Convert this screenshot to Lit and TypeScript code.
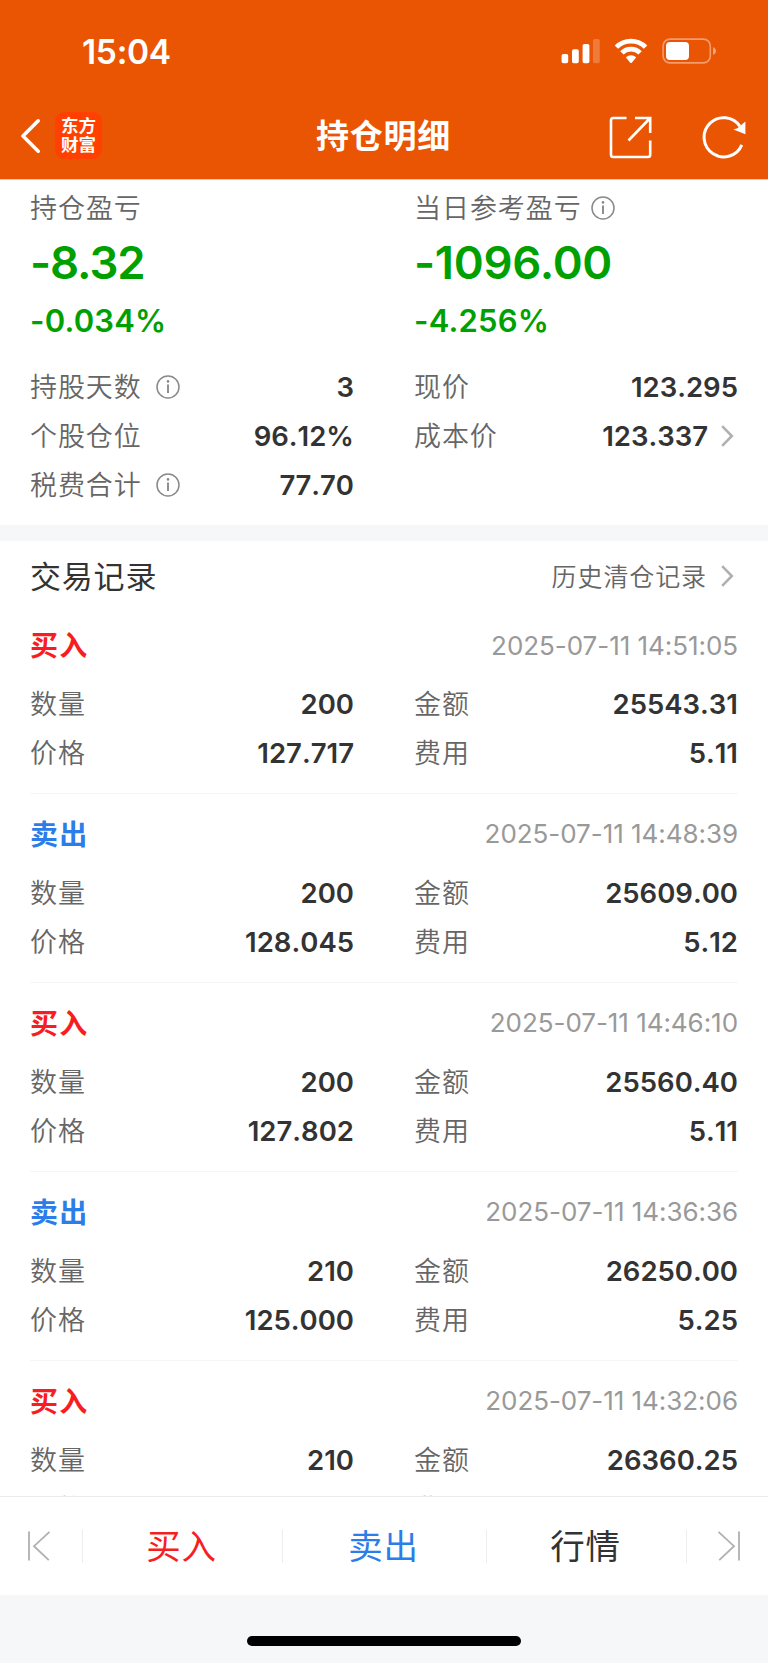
import { LitElement, html, css, svg } from "lit";
import { customElement, property } from "lit/decorators.js";

interface Trade {
  side: "buy" | "sell";
  time: string;
  qty: string;
  amount: string;
  price: string;
  fee: string;
}

const TRADES: Trade[] = [
  { side: "buy", time: "2025-07-11 14:51:05", qty: "200", amount: "25543.31", price: "127.717", fee: "5.11" },
  { side: "sell", time: "2025-07-11 14:48:39", qty: "200", amount: "25609.00", price: "128.045", fee: "5.12" },
  { side: "buy", time: "2025-07-11 14:46:10", qty: "200", amount: "25560.40", price: "127.802", fee: "5.11" },
  { side: "sell", time: "2025-07-11 14:36:36", qty: "210", amount: "26250.00", price: "125.000", fee: "5.25" },
  { side: "buy", time: "2025-07-11 14:32:06", qty: "210", amount: "26360.25", price: "125.525", fee: "5.27" },
];

const infoIcon = html`<svg class="info" width="24" height="24" viewBox="0 0 24 24" fill="none" stroke="#8a8a8a">
  <circle cx="12" cy="12" r="11" stroke-width="1.5" />
  <path d="M12 9.6V18" stroke-width="1.9" />
  <circle cx="12" cy="6.4" r="1.3" fill="#8a8a8a" stroke="none" />
</svg>`;

const moreIcon = html`<svg class="more" width="14" height="22" viewBox="0 0 14 22" fill="none" stroke="#b0b0b0" stroke-width="2.6">
  <path d="M1.2 1.2L10.8 11L1.2 20.8" />
</svg>`;

@customElement("info-row")
class InfoRow extends LitElement {
  @property() label = "";
  @property() value = "";
  @property({ type: Boolean }) info = false;
  @property({ type: Boolean }) more = false;

  static styles = css`
    :host {
      display: flex;
      align-items: center;
      height: 49.2px;
    }
    .label {
      flex: 1;
      display: flex;
      align-items: center;
      font-weight: 350;
      color: #666;
    }
    .text {
      font-size: 27px;
      letter-spacing: 0.9px;
      padding-bottom: 3px;
    }
    .info {
      margin-left: 14px;
    }
    .value {
      font-size: 27.5px;
      font-weight: 600;
      color: #333;
      letter-spacing: 0;
      font-kerning: none;
    }
    .more {
      margin: 0 3px 0 13px;
    }
  `;

  render() {
    return html`<span class="label"><span class="text">${this.label}</span>${this.info ? infoIcon : ""}</span>
      <span class="value">${this.value}</span>${this.more ? moreIcon : ""}`;
  }
}

@customElement("trade-record")
class TradeRecord extends LitElement {
  @property({ attribute: false }) trade!: Trade;

  static styles = css`
    :host {
      display: block;
      box-sizing: border-box;
      height: 188.9px;
      margin: 0 30px;
      padding-top: 5px;
      border-bottom: 1.5px solid #f4f5f6;
    }
    .head {
      display: flex;
      align-items: center;
      justify-content: space-between;
      height: 69px;
    }
    .side {
      font-size: 28px;
      font-weight: 600;
      letter-spacing: 1.2px;
      padding-bottom: 2px;
    }
    .buy {
      color: #f81d22;
    }
    .sell {
      color: #2b7de9;
    }
    .time {
      font-size: 26px;
      color: #999;
      letter-spacing: -0.05px;
    }
    .grid {
      display: grid;
      grid-template-columns: 1fr 1fr;
      column-gap: 60px;
    }
  `;

  render() {
    const t = this.trade;
    return html`<div class="head">
        <span class="side ${t.side}">${t.side === "buy" ? "买入" : "卖出"}</span>
        <span class="time">${t.time}</span>
      </div>
      <div class="grid">
        <info-row label="数量" value=${t.qty}></info-row>
        <info-row label="金额" value=${t.amount}></info-row>
        <info-row label="价格" value=${t.price}></info-row>
        <info-row label="费用" value=${t.fee}></info-row>
      </div>`;
  }
}

@customElement("app-root")
class AppRoot extends LitElement {
  static styles = css`
    :host {
      display: flex;
      flex-direction: column;
      width: 768px;
      height: 1663px;
      overflow: hidden;
      background: #fff;
      color: #333;
      font-family: Inter, "Noto Sans CJK SC", sans-serif;
      white-space: nowrap;
    }
    .header {
      background: #ea5504;
      color: #fff;
      flex: none;
      border-bottom: 1px solid #f7c6a9;
      box-sizing: border-box;
      height: 180px;
    }
    .status {
      height: 98px;
      box-sizing: border-box;
      padding: 4px 51px 0 82px;
      display: flex;
      align-items: center;
      justify-content: space-between;
    }
    .clock {
      font-size: 33.5px;
      font-weight: 600;
      letter-spacing: -0.3px;
      padding-top: 2px;
    }
    .nav {
      height: 77px;
      display: grid;
      grid-template-columns: 1fr auto 1fr;
      align-items: center;
      padding: 0 22px 0 21px;
    }
    .nav-left {
      display: flex;
      align-items: center;
      gap: 14px;
      padding-bottom: 2px;
    }
    .logo {
      width: 47px;
      height: 47px;
      border-radius: 9px;
      background: #ff4000;
      display: flex;
      flex-direction: column;
      align-items: center;
      justify-content: center;
      font-size: 17.5px;
      line-height: 19px;
      font-weight: 700;
      box-sizing: border-box;
      padding-bottom: 2px;
    }
    .title {
      font-size: 33px;
      font-weight: 600;
      letter-spacing: 0.7px;
      padding-bottom: 5px;
    }
    .nav-right {
      display: flex;
      justify-content: flex-end;
      gap: 50px;
    }
    .summary {
      flex: none;
      box-sizing: border-box;
      height: 345px;
      padding: 9px 30px 0;
    }
    .cols {
      display: grid;
      grid-template-columns: 1fr 1fr;
      column-gap: 60px;
    }
    .label {
      display: flex;
      align-items: center;
      height: 38px;
      font-size: 27px;
      font-weight: 350;
      letter-spacing: 0.95px;
      color: #666;
    }
    .label span {
      padding-bottom: 3px;
    }
    .label .info {
      margin-left: 9px;
    }
    .big {
      height: 70px;
      line-height: 71px;
      font-size: 45.5px;
      font-weight: 600;
      letter-spacing: -0.3px;
      color: #00a000;
    }
    .tight {
      letter-spacing: -1.1px;
    }
    .pct {
      height: 46px;
      line-height: 47px;
      font-size: 31px;
      font-weight: 560;
      letter-spacing: 0.2px;
      color: #00a000;
    }
    .facts {
      margin-top: 19.5px;
    }
    .band {
      flex: none;
      height: 16px;
      background: #f6f7f9;
    }
    .section {
      flex: none;
      height: 64.5px;
      box-sizing: border-box;
      padding: 5px 30px 0;
      display: flex;
      align-items: center;
      justify-content: space-between;
    }
    .section-title {
      font-size: 31px;
      letter-spacing: 0.8px;
      padding-bottom: 3px;
    }
    .history {
      display: flex;
      align-items: center;
      font-size: 25px;
      letter-spacing: 0.9px;
      color: #666;
      font-weight: 350;
    }
    .history span {
      padding-bottom: 2px;
    }
    .history .more {
      margin: 0 3px 0 14px;
    }
    .records {
      flex: 1;
      min-height: 0;
      overflow: hidden;
    }
    .tabs {
      flex: none;
      height: 99px;
      border-top: 1px solid #ececec;
      box-sizing: border-box;
      display: grid;
      grid-template-columns: 82px 200px 204px 200px 82px;
      align-items: center;
      background: #fff;
    }
    .tab {
      height: 33px;
      display: flex;
      align-items: center;
      justify-content: center;
      border-left: 1px solid #ededed;
      font-size: 34.5px;
      letter-spacing: 0.7px;
      box-sizing: border-box;
    }
    .tab span {
      padding: 0 2px 5px 0;
    }
    .edge {
      border: 0;
      padding-right: 5px;
    }
    .edge-right {
      padding-left: 3px;
    }
    .red {
      color: #f81d22;
    }
    .blue {
      color: #2b7de9;
    }
    .bottom {
      flex: none;
      height: 68px;
      background: #f6f7f9;
      box-sizing: border-box;
      padding-top: 41px;
    }
    .home {
      width: 274px;
      height: 10px;
      border-radius: 5px;
      background: #000;
      margin: 0 auto;
    }
  `;

  private statusIcons() {
    return svg`<svg width="156" height="28" viewBox="0 0 156 28" fill="#fff">
      <rect x="0.6" y="17" width="6.6" height="9.3" rx="1.8" />
      <rect x="11" y="12.3" width="6.8" height="14" rx="1.8" />
      <rect x="21.6" y="7" width="6.8" height="19.3" rx="1.8" />
      <rect x="32" y="2" width="6.8" height="24.3" rx="1.8" fill-opacity="0.22" />
      <g fill="none" stroke="#fff" stroke-width="4.8">
        <path d="M55.4 10.1A20.6 20.6 0 0 1 84.6 10.1" />
        <path d="M60.9 15.9A12.9 12.9 0 0 1 79.1 15.9" />
      </g>
      <path d="M64.8 20.3Q70 16.4 75.2 20.3L70.8 25.7Q70 26.5 69.2 25.7Z" />
      <rect x="102.1" y="2.1" width="47.2" height="23.8" rx="6.8" fill="none" stroke="#fff" stroke-opacity="0.42" stroke-width="1.6" />
      <rect x="105" y="5" width="23" height="18" rx="4" />
      <path d="M152 10.2Q155 11.2 155 14Q155 16.8 152 17.8Z" fill-opacity="0.45" />
    </svg>`;
  }

  render() {
    return html`
      <div class="header">
        <div class="status"><span class="clock">15:04</span>${this.statusIcons()}</div>
        <div class="nav">
          <div class="nav-left">
            <svg width="20" height="36" viewBox="0 0 20 36" fill="none" stroke="#fff" stroke-width="3.6" stroke-linecap="round" stroke-linejoin="round">
              <path d="M17.2 2.8L2 18L17.2 33.2" />
            </svg>
            <div class="logo"><span>东方</span><span>财富</span></div>
          </div>
          <div class="title">持仓明细</div>
          <div class="nav-right">
            <svg width="44" height="44" viewBox="0 0 44 44" fill="none" stroke="#fff" stroke-width="2.6">
              <path d="M18.5 3H5.2Q3 3 3 5.2V39.8Q3 42 5.2 42H40Q42.2 42 42.2 39.8V25.5" />
              <path d="M27 3H42.2V18M41.7 3.5L20.5 25.5" />
            </svg>
            <svg width="44" height="44" viewBox="0 0 44 44" fill="none" stroke="#fff" stroke-width="3">
              <path d="M39.8 29.8A19.6 19.6 0 1 1 38 11.4" />
              <path d="M43.4 6.6V19.2L31.4 14.4L35.4 13.2Z" fill="#fff" stroke="none" />
            </svg>
          </div>
        </div>
      </div>
      <div class="summary">
        <div class="cols">
          <div>
            <div class="label"><span>持仓盈亏</span></div>
            <div class="big tight">-8.32</div>
            <div class="pct">-0.034%</div>
          </div>
          <div>
            <div class="label"><span>当日参考盈亏</span>${infoIcon}</div>
            <div class="big">-1096.00</div>
            <div class="pct">-4.256%</div>
          </div>
        </div>
        <div class="cols facts">
          <info-row label="持股天数" value="3" info></info-row>
          <info-row label="现价" value="123.295"></info-row>
          <info-row label="个股仓位" value="96.12%"></info-row>
          <info-row label="成本价" value="123.337" more></info-row>
          <info-row label="税费合计" value="77.70" info></info-row>
        </div>
      </div>
      <div class="band"></div>
      <div class="section">
        <span class="section-title">交易记录</span>
        <span class="history"><span>历史清仓记录</span>${moreIcon}</span>
      </div>
      <div class="records">${TRADES.map((t) => html`<trade-record .trade=${t}></trade-record>`)}</div>
      <div class="tabs">
        <div class="tab edge">
          <svg width="24" height="30" viewBox="0 0 24 30" fill="none" stroke="#b0b0b0" stroke-width="1.8">
            <path d="M2 0.5V29.5M22.5 0.8L7 15.2L21.8 29.2" />
          </svg>
        </div>
        <div class="tab red"><span>买入</span></div>
        <div class="tab blue"><span>卖出</span></div>
        <div class="tab"><span>行情</span></div>
        <div class="tab edge-right">
          <svg width="24" height="30" viewBox="0 0 24 30" fill="none" stroke="#b0b0b0" stroke-width="1.8">
            <path d="M22 0.5V29.5M1.5 0.8L17 15.2L2.2 29.2" />
          </svg>
        </div>
      </div>
      <div class="bottom"><div class="home"></div></div>
    `;
  }
}
